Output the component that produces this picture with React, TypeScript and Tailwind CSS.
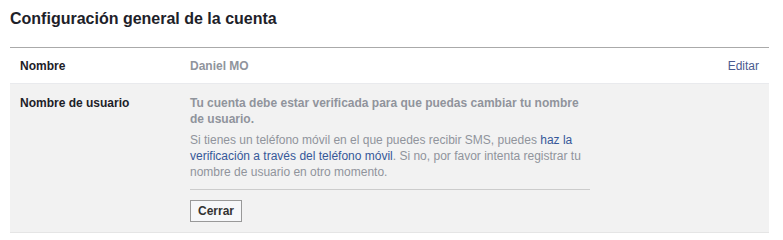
import { useState } from "react";

const font = { fontFamily: '"Liberation Sans", Arial, sans-serif' };

export default function App() {
  const [open, setOpen] = useState(true);

  return (
    <div className="min-h-screen bg-white pl-[10px]" style={font}>
      <div className="w-[759px]">
        <div className="flex h-[48px] items-start border-b border-[#aaaaaa] pt-[9px]">
          <h2 className="text-[16px] font-bold leading-[20px] text-[#1d2129]">
            Configuración general de la cuenta
          </h2>
        </div>

        <div className="flex h-[36px] items-center border-b border-[#e9eaed] px-[10px] text-[12px] leading-[16px]">
          <div className="w-[170px] font-bold text-[#1d2129]">Nombre</div>
          <div className="flex-1 font-bold text-[#90949c]">Daniel MO</div>
          <a href="#" className="text-[#4b5b8f] hover:underline">
            Editar
          </a>
        </div>

        {open && (
          <div className="flex border-b border-[#e5e5e5] bg-[#f2f2f2] px-[10px] pt-[11px] pb-[10px] text-[12px] leading-[16px]">
            <div className="w-[170px] font-bold text-[#1d2129]">Nombre de usuario</div>
            <div className="w-[400px]">
              <p className="font-bold text-[#90949c]">
                Tu cuenta debe estar verificada para que puedas cambiar tu nombre de usuario.
              </p>
              <p className="mt-[5px] leading-[16px] text-[#90949c]">
                Si tienes un teléfono móvil en el que puedes recibir SMS, puedes{" "}
                <a href="#" className="text-[#365899] hover:underline">
                  haz la verificación a través del teléfono móvil
                </a>
                . Si no, por favor intenta registrar tu nombre de usuario en otro momento.
              </p>
              <div className="mt-[9px] border-t border-[#cccccc] pt-[10px]">
                <button
                  onClick={() => setOpen(false)}
                  className="h-[22px] border border-[#999999] bg-[#f6f7f9] px-[7px] text-[12px] font-bold leading-[20px] text-[#333333]"
                >
                  Cerrar
                </button>
              </div>
            </div>
          </div>
        )}
      </div>
    </div>
  );
}
